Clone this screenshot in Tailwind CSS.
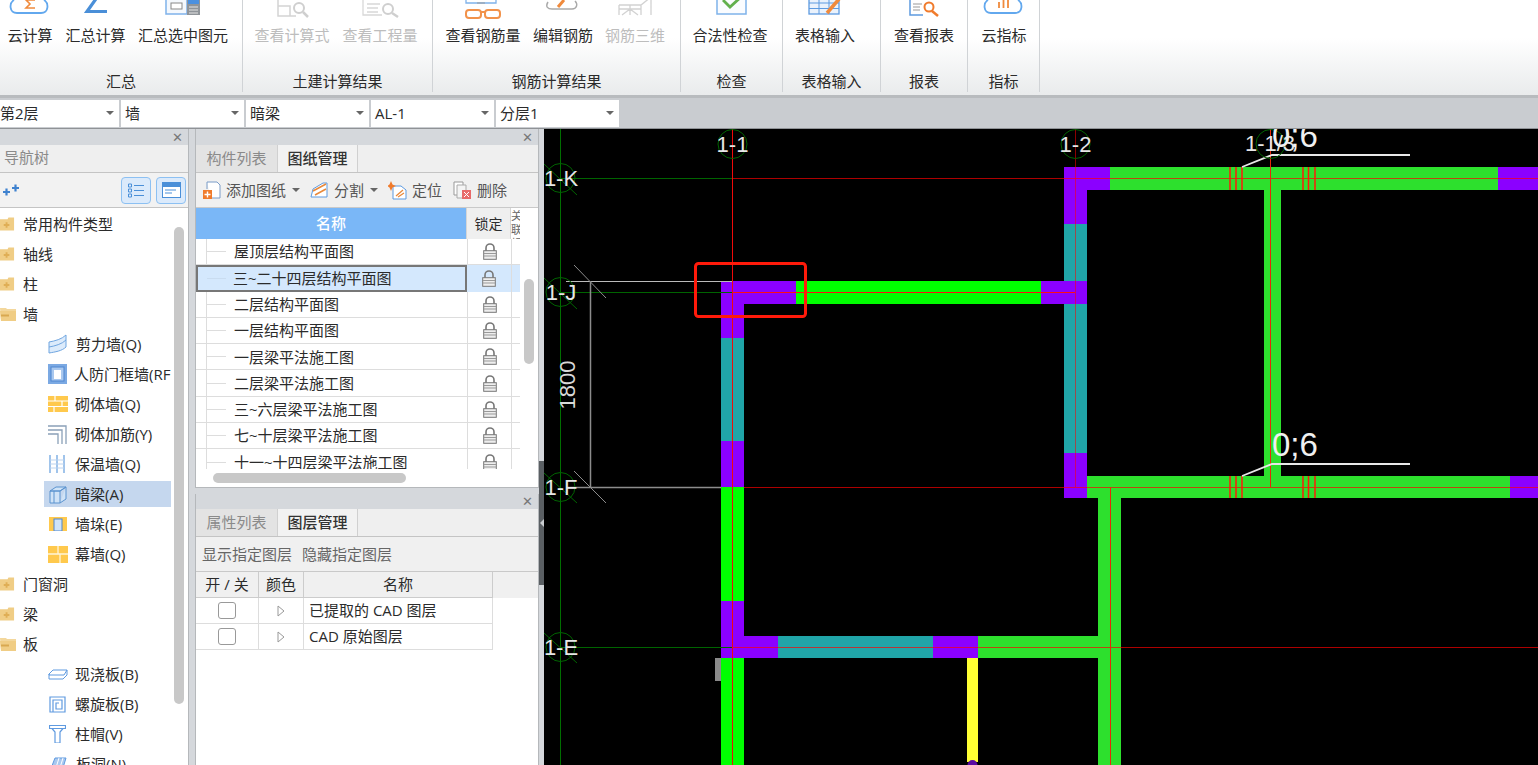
<!DOCTYPE html>
<html lang="zh">
<head>
<meta charset="utf-8">
<title>GTJ</title>
<script src="https://cdn.jsdelivr.net/npm/@tailwindcss/browser@4"></script>
</head>
<body class="w-[1538px] h-[765px] overflow-hidden bg-[#d5d8dc] text-[15px] text-[#2b2b2b] font-['Open_Sans','Noto_Sans_CJK_SC',sans-serif]">

<!-- shared icons -->
<svg class="hidden">
  <symbol id="lock" viewBox="0 0 14 17">
    <path d="M3 8V5a4 4 0 0 1 8 0v3" fill="none" stroke="#777" stroke-width="1.6"/>
    <rect x="0.7" y="7.7" width="12.6" height="8.6" fill="#eee" stroke="#777"/>
    <path d="M1 10.5h12M1 13h12" stroke="#999"/>
  </symbol>
  <symbol id="closed" viewBox="0 0 16 16">
    <path d="M0 3H8L9 1H15V15H0Z" fill="#f0cd85"/>
    <path d="M4 9H10M7 6V12" stroke="#dfae55" stroke-width="2"/>
  </symbol>
  <symbol id="open" viewBox="0 0 17 16">
    <path d="M0 2H6L7 3H16V15H1Z" fill="#f3d79c"/>
    <path d="M0 5H16V15H1Z" fill="#f0cd85"/>
    <path d="M1 9.500H9" stroke="#d9a850" stroke-width="2"/>
  </symbol>
  <symbol id="tri" viewBox="0 0 8 12"><path d="M1 1L7 6L1 11Z" fill="#fff" stroke="#999"/></symbol>
</svg>

<!-- ribbon -->
<div class="flex h-[95px] bg-gradient-to-b from-white from-40% to-[#e9ebec] border-b-[3px] border-[#b8bbbe] box-content">
  <div class="w-[243px] h-[92px] flex flex-col justify-between border-r border-[#d0d3d6]">
    <div class="flex">
      <div class="w-[60px] text-center">
        <svg class="block h-[25px]" width="60" height="25" viewBox="0 0 60 25"><path d="M14 0C9 3 9 13 17 13H41C49 13 49 3 44 0" fill="none" stroke="#62a8ee" stroke-width="1.800"/><path d="M35 0H26L30 4L26 8H35" fill="none" stroke="#f08a3c" stroke-width="1.600"/></svg>
        <div class="leading-[20px]">云计算</div>
      </div>
      <div class="w-[71px] text-center">
        <svg class="block h-[25px]" width="71" height="25" viewBox="60 0 71 25"><path d="M98 -4L87 11.500H107" fill="none" stroke="#4a8fd8" stroke-width="3.200"/></svg>
        <div class="leading-[20px]">汇总计算</div>
      </div>
      <div class="w-[104px] text-center">
        <svg class="block h-[25px]" width="104" height="25" viewBox="131 0 104 25"><rect x="166" y="-3" width="21" height="17" fill="#f4f8fd" stroke="#7fb2ea" stroke-width="1.500"/><rect x="171" y="3" width="11" height="6" fill="#fff" stroke="#888"/><rect x="187" y="-2" width="13" height="17" fill="#8f9499"/><rect x="188" y="0" width="11" height="4" fill="#4a90e0"/><path d="M189 7h9M189 10h9M189 13h9" stroke="#e4e4e4"/></svg>
        <div class="leading-[20px]">汇总选中图元</div>
      </div>
    </div>
    <div class="text-center leading-[20px] mb-[1px]">汇总</div>
  </div>

  <div class="w-[190px] h-[92px] flex flex-col justify-between border-r border-[#d0d3d6]">
    <div class="flex pl-[5px] text-[#bdbdbd]">
      <div class="w-[88px] text-center">
        <svg class="block h-[25px]" width="88" height="25" viewBox="248 0 88 25"><path d="M278 0V16H296M278 6H290V16" fill="none" stroke="#d4d4d4" stroke-width="1.500"/><circle cx="299" cy="8" r="5" fill="none" stroke="#cfcfcf" stroke-width="2"/><path d="M303 12L308 17" stroke="#cfcfcf" stroke-width="2.500"/></svg>
        <div class="leading-[20px]">查看计算式</div>
      </div>
      <div class="w-[88px] text-center">
        <svg class="block h-[25px]" width="88" height="25" viewBox="336 0 88 25"><path d="M363 0V15H382M367 4H380M367 8H378M367 12H378" fill="none" stroke="#d8d8d8" stroke-width="1.300"/><circle cx="388" cy="9" r="5" fill="none" stroke="#cfcfcf" stroke-width="2"/><path d="M392 13L398 17" stroke="#cfcfcf" stroke-width="2.500"/></svg>
        <div class="leading-[20px]">查看工程量</div>
      </div>
    </div>
    <div class="text-center leading-[20px] mb-[1px]">土建计算结果</div>
  </div>

  <div class="w-[248px] h-[92px] flex flex-col justify-between border-r border-[#d0d3d6]">
    <div class="flex pl-[7px]">
      <div class="w-[86px] text-center">
        <svg class="block h-[25px]" width="86" height="25" viewBox="440 0 86 25"><path d="M466 0V3H496V0" fill="none" stroke="#7fb2ea" stroke-width="1.300"/><path d="M477 3H485" stroke="#999"/><rect x="466" y="10" width="15" height="8" rx="3" fill="none" stroke="#f2924a" stroke-width="2"/><rect x="485" y="10" width="15" height="8" rx="3" fill="none" stroke="#f2924a" stroke-width="2"/><path d="M481 12H485" stroke="#f2924a" stroke-width="2"/></svg>
        <div class="leading-[20px]">查看钢筋量</div>
      </div>
      <div class="w-[74px] text-center">
        <svg class="block h-[25px]" width="74" height="25" viewBox="526 0 74 25"><path d="M548 2C545 7 548 9 552 9H572C577 9 578 4 575 1" fill="none" stroke="#aaa" stroke-width="1.500"/><path d="M558 7L564 0" stroke="#f08a3c" stroke-width="3"/></svg>
        <div class="leading-[20px]">编辑钢筋</div>
      </div>
      <div class="w-[70px] text-center text-[#bdbdbd]">
        <svg class="block h-[25px]" width="70" height="25" viewBox="600 0 70 25"><path d="M619 5H641L651 -3M619 5V15M630 5V15M641 5V15M651 -3V15M619 9H641M630 9L622 15M630 9L638 15" fill="none" stroke="#d2d2d2" stroke-width="1.300"/></svg>
        <div class="leading-[20px]">钢筋三维</div>
      </div>
    </div>
    <div class="text-center leading-[20px] mb-[1px]">钢筋计算结果</div>
  </div>

  <div class="w-[102px] h-[92px] flex flex-col justify-between border-r border-[#d0d3d6]">
    <div class="pl-[7px]">
      <div class="w-[84px] text-center">
        <svg class="block h-[25px]" width="84" height="25" viewBox="688 0 84 25"><path d="M717 -2V14H746V-2" fill="#fafcff" stroke="#7fb2ea" stroke-width="1.500"/><path d="M723 0L730 7L741 -3" fill="none" stroke="#62b04e" stroke-width="2.800"/></svg>
        <div class="leading-[20px]">合法性检查</div>
      </div>
    </div>
    <div class="text-center leading-[20px] mb-[1px]">检查</div>
  </div>

  <div class="w-[98px] h-[92px] flex flex-col justify-between border-r border-[#d0d3d6]">
    <div class="pl-[6px]">
      <div class="w-[72px] text-center">
        <svg class="block h-[25px]" width="72" height="25" viewBox="788 0 72 25"><rect x="808" y="-3" width="30" height="17" fill="#eaf2fc" stroke="#5d9ae0" stroke-width="1.300"/><path d="M808 3H838M808 8.500H838M818 -3V14M828 -3V14" stroke="#5d9ae0"/><path d="M826 13L838 -1" stroke="#f08a3c" stroke-width="3.500"/></svg>
        <div class="leading-[20px]">表格输入</div>
      </div>
    </div>
    <div class="text-center leading-[20px] mb-[1px]">表格输入</div>
  </div>

  <div class="w-[87px] h-[92px] flex flex-col justify-between border-r border-[#d0d3d6]">
    <div class="pl-[9px]">
      <div class="w-[68px] text-center">
        <svg class="block h-[25px]" width="68" height="25" viewBox="889 0 68 25"><path d="M909 0V15H922" fill="none" stroke="#5d9ae0" stroke-width="1.500"/><path d="M912 4H921M912 7H919M912 10H919" stroke="#999"/><circle cx="928" cy="7" r="4.500" fill="#fff" stroke="#f07b2c" stroke-width="2"/><path d="M931 11L937 16" stroke="#f07b2c" stroke-width="2.500"/></svg>
        <div class="leading-[20px]">查看报表</div>
      </div>
    </div>
    <div class="text-center leading-[20px] mb-[1px]">报表</div>
  </div>

  <div class="w-[72px] h-[92px] flex flex-col justify-between border-r border-[#d0d3d6]">
    <div class="pl-[6px]">
      <div class="w-[60px] text-center">
        <svg class="block h-[25px]" width="60" height="25" viewBox="973 0 60 25"><path d="M987 0C982 3 982 13 990 13H1014C1022 13 1022 3 1017 0" fill="none" stroke="#62a8ee" stroke-width="1.800"/><path d="M998 2V8M1002.500 0V8M1007 0V8" stroke="#f08a3c" stroke-width="1.800"/></svg>
        <div class="leading-[20px]">云指标</div>
      </div>
    </div>
    <div class="text-center leading-[20px] mb-[1px]">指标</div>
  </div>
</div>

<!-- selectors -->
<div class="flex gap-[2px] h-[31px] pt-[2px] bg-[#c9ccd0] border-b border-[#8f9296] box-border">
  <div class="w-[119px] h-[27px] pb-[1px] bg-white flex items-center justify-between pr-[5px]"><span>第2层</span><span class="w-0 h-0 border-x-[4px] border-t-[4px] border-x-transparent border-t-[#666]"></span></div>
  <div class="w-[123px] h-[27px] pb-[1px] bg-white flex items-center justify-between pl-[4px] pr-[5px]"><span>墙</span><span class="w-0 h-0 border-x-[4px] border-t-[4px] border-x-transparent border-t-[#666]"></span></div>
  <div class="w-[123px] h-[27px] pb-[1px] bg-white flex items-center justify-between pl-[4px] pr-[5px]"><span>暗梁</span><span class="w-0 h-0 border-x-[4px] border-t-[4px] border-x-transparent border-t-[#666]"></span></div>
  <div class="w-[123px] h-[27px] pb-[1px] bg-white flex items-center justify-between pl-[4px] pr-[5px]"><span>AL-1</span><span class="w-0 h-0 border-x-[4px] border-t-[4px] border-x-transparent border-t-[#666]"></span></div>
  <div class="w-[123px] h-[27px] pb-[1px] bg-white flex items-center justify-between pl-[4px] pr-[5px]"><span>分层1</span><span class="w-0 h-0 border-x-[4px] border-t-[4px] border-x-transparent border-t-[#666]"></span></div>
</div>

<div class="flex h-[636px]">

  <!-- nav tree -->
  <div class="w-[189px] flex flex-col border-r border-[#b5b8bb] bg-white">
    <div class="h-[16px] bg-[#d5d8dc] flex items-center justify-end pr-[5px] text-[#777] text-[13px] leading-none">✕</div>
    <div class="h-[28px] pb-[2px] bg-[#efefef] border-b border-[#c4c4c4] flex items-center pl-[4px] text-[#8a8a8a]">导航树</div>
    <div class="h-[35px] bg-[#f2f2f2] border-b border-[#c4c4c4] flex items-center justify-between pl-[3px] pr-[2px]">
      <svg width="16" height="12" viewBox="0 0 16 12"><path d="M0 8H7M3.500 4.500V11.500" stroke="#3f82cf" stroke-width="2.200"/><path d="M9 4H16M12.500 0.500V7.500" stroke="#3f82cf" stroke-width="2.200"/></svg>
      <div class="flex gap-[5px]">
        <div class="w-[30px] h-[27px] rounded-[4px] bg-[#dbeafb] border border-[#8cc0f2] flex items-center justify-center">
          <svg width="16" height="15" viewBox="0 0 16 15"><path d="M0.500 1h3v3h-3zM0.500 6h3v3h-3zM0.500 11h3v3h-3z" fill="none" stroke="#4a8fd8"/><path d="M6 2.500H16M6 7.500H16M6 12.500H16" stroke="#4a8fd8"/></svg>
        </div>
        <div class="w-[30px] h-[27px] rounded-[4px] bg-[#dbeafb] border border-[#8cc0f2] flex items-center justify-center">
          <svg width="19" height="16" viewBox="0 0 19 16"><rect x="0.500" y="0.500" width="18" height="15" fill="#fff" stroke="#4a8fd8"/><rect x="1" y="1" width="17" height="4" fill="#4a8fd8"/><path d="M3 8H14M3 11H10" stroke="#4a8fd8"/></svg>
        </div>
      </div>
    </div>
    <div class="relative flex-1 overflow-hidden pt-[1px]">
      <div class="absolute left-[174px] top-[19px] w-[10px] h-[477px] rounded-full bg-[#c8c8c8]"></div>
      <div class="h-[30px] flex items-center gap-[8px]"><svg width="15" height="16"><use href="#closed"/></svg>常用构件类型</div>
      <div class="h-[30px] flex items-center gap-[8px]"><svg width="15" height="16"><use href="#closed"/></svg>轴线</div>
      <div class="h-[30px] flex items-center gap-[8px]"><svg width="15" height="16"><use href="#closed"/></svg>柱</div>
      <div class="h-[30px] flex items-center gap-[6px]"><svg width="17" height="16"><use href="#open"/></svg>墙</div>

      <div class="h-[30px] w-[171px] flex items-center pl-[48px] gap-[8px] overflow-hidden whitespace-nowrap">
        <svg class="shrink-0" width="20" height="20" viewBox="0 0 20 20"><path d="M1 8C7 7 14 5 18 1V13C14 17 7 18 1 19Z" fill="#dcebfb" stroke="#6fa5e0"/><path d="M1 13C7 12 14 10 18 6" fill="none" stroke="#6fa5e0"/></svg>剪力墙(Q)</div>
      <div class="h-[30px] w-[171px] flex items-center pl-[48px] gap-[7px] overflow-hidden whitespace-nowrap">
        <svg class="shrink-0" width="19" height="20" viewBox="0 0 19 20"><rect width="19" height="20" fill="#7ba9e3"/><rect x="3" y="3" width="13" height="14" fill="#a9c8ef" stroke="#4f86cf"/><rect x="6" y="6" width="7" height="9" fill="#fff"/></svg>人防门框墙(RF</div>
      <div class="h-[30px] w-[171px] flex items-center pl-[48px] gap-[7px] overflow-hidden whitespace-nowrap">
        <svg class="shrink-0" width="20" height="16" viewBox="0 0 20 16"><rect width="20" height="16" fill="#ffc94d"/><path d="M0 5H20M0 10.500H20M7 0V5M14 5V10.500M6 10.500V16" stroke="#fff" stroke-width="1.200"/></svg>砌体墙(Q)</div>
      <div class="h-[30px] w-[171px] flex items-center pl-[48px] gap-[8px] overflow-hidden whitespace-nowrap">
        <svg class="shrink-0" width="19" height="19" viewBox="0 0 19 19"><path d="M0 1H18V19M0 5H14V19M0 9H10V19" fill="none" stroke="#8aa0b8" stroke-width="1.300"/></svg>砌体加筋(Y)</div>
      <div class="h-[30px] w-[171px] flex items-center pl-[48px] gap-[9px] overflow-hidden whitespace-nowrap">
        <svg class="shrink-0" width="18" height="18" viewBox="0 0 18 18"><path d="M2 0V18M9 0V18M16 0V18" stroke="#6fa5e0" stroke-width="1.300"/><path d="M2 5H16M2 9H16M2 13H16" stroke="#bcd3ee"/></svg>保温墙(Q)</div>
      <div class="h-[30px] w-[171px] flex items-center pl-[44px] overflow-hidden whitespace-nowrap">
        <div class="w-[127px] h-[26px] bg-[#c5d7ee] flex items-center pl-[5px] gap-[8px]">
          <svg class="shrink-0" width="18" height="19" viewBox="0 0 18 19"><path d="M1 6L7 2H17L11 6ZM1 6V18H11V6M11 18L17 14V2" fill="#cfe3f7" stroke="#5b93cf"/><path d="M1 6H11L17 2" fill="none" stroke="#5b93cf"/><path d="M5 6V18" stroke="#5b93cf"/></svg>暗梁(A)</div>
      </div>
      <div class="h-[30px] w-[171px] flex items-center pl-[49px] gap-[8px] overflow-hidden whitespace-nowrap">
        <svg class="shrink-0" width="18" height="14" viewBox="0 0 18 14"><rect width="18" height="14" fill="#ffc94d"/><rect x="5" y="2" width="8" height="12" fill="#cfe3f7" stroke="#4f86cf"/></svg>墙垛(E)</div>
      <div class="h-[30px] w-[171px] flex items-center pl-[48px] gap-[7px] overflow-hidden whitespace-nowrap">
        <svg class="shrink-0" width="20" height="17" viewBox="0 0 20 17"><rect width="20" height="17" fill="#ffc94d"/><path d="M0 8H20M10 0V8M12 8V17" stroke="#fff5d8" stroke-width="1.300"/></svg>幕墙(Q)</div>

      <div class="h-[30px] flex items-center gap-[8px]"><svg width="15" height="16"><use href="#closed"/></svg>门窗洞</div>
      <div class="h-[30px] flex items-center gap-[8px]"><svg width="15" height="16"><use href="#closed"/></svg>梁</div>
      <div class="h-[30px] flex items-center gap-[6px]"><svg width="17" height="16"><use href="#open"/></svg>板</div>

      <div class="h-[30px] w-[171px] flex items-center pl-[48px] gap-[7px] whitespace-nowrap">
        <svg class="shrink-0" width="20" height="11" viewBox="0 0 20 11"><path d="M1 5L5 1H19L16 6H1ZM1 5V10H15L19 6V1" fill="#fff" stroke="#5f9ae0"/></svg>现浇板(B)</div>
      <div class="h-[30px] w-[171px] flex items-center pl-[49px] gap-[9px] whitespace-nowrap">
        <svg class="shrink-0" width="17" height="17" viewBox="0 0 17 17"><path d="M1 1H16V16H1ZM4 16V4H13V13H7V7H10" fill="none" stroke="#5f9ae0" stroke-width="1.200"/></svg>螺旋板(B)</div>
      <div class="h-[30px] w-[171px] flex items-center pl-[49px] gap-[9px] whitespace-nowrap">
        <svg class="shrink-0" width="17" height="18" viewBox="0 0 17 18"><path d="M0.500 0.500H16.500V3.500H0.500ZM3 3.500L6 7V18H11V7L14 3.500" fill="#fff" stroke="#5f9ae0" stroke-width="1.200"/></svg>柱帽(V)</div>
      <div class="h-[30px] w-[171px] flex items-center pl-[49px] gap-[9px] whitespace-nowrap">
        <svg class="shrink-0" width="18" height="16" viewBox="0 0 18 16"><path d="M1 15L6 2H17L13 15Z" fill="#a9c8ef" stroke="#5f9ae0"/><path d="M6 15L10 2M10 15L14 2" stroke="#fff"/></svg>板洞(N)</div>
    </div>
  </div>

  <div class="w-[6px]"></div>

  <!-- drawing and layer panels -->
  <div class="w-[344px] flex flex-col">
    <div class="h-[359px] flex flex-col bg-white border-x border-b border-[#b5b8bb]">
      <div class="h-[16px] shrink-0 bg-[#d5d8dc] flex items-center justify-end pr-[5px] text-[#777] text-[13px] leading-none">✕</div>
      <div class="h-[28px] shrink-0 flex bg-[#efefef] border-b border-[#c4c4c4]">
        <div class="w-[81px] bg-[#e3e3e3] flex items-center justify-center text-[#8a8a8a]">构件列表</div>
        <div class="w-[81px] bg-[#f2f2f2] border-x border-[#d0d0d0] flex items-center justify-center font-medium text-[#333]">图纸管理</div>
      </div>
      <div class="h-[35px] shrink-0 bg-[#f0f0f0] border-b border-[#c9c9c9] flex items-center pl-[7px] text-[#555]">
        <svg width="18" height="19" viewBox="0 0 18 19"><path d="M4 1H14L17 4V17H8M4 1V8" fill="#fff" stroke="#7a9cc8"/><rect x="0" y="9" width="9" height="9" fill="#f07b2c"/><path d="M1.500 13.500H7.500M4.500 10.500V16.500" stroke="#fff" stroke-width="1.400"/></svg>
        <span class="ml-[5px]">添加图纸</span>
        <span class="ml-[6px] w-0 h-0 border-x-[4px] border-t-[4px] border-x-transparent border-t-[#666]"></span>
        <svg class="ml-[10px]" width="20" height="18" viewBox="0 0 20 18"><path d="M1 16L3 8L13 2H17V16Z" fill="#fff" stroke="#5d9ae0"/><path d="M3 10L16 3M5 14L16 8" stroke="#e9893a" stroke-width="1.500"/></svg>
        <span class="ml-[4px]">分割</span>
        <span class="ml-[6px] w-0 h-0 border-x-[4px] border-t-[4px] border-x-transparent border-t-[#666]"></span>
        <svg class="ml-[10px]" width="19" height="19" viewBox="0 0 19 19"><path d="M5 5H13L18 9V18H5Z" fill="#fff" stroke="#5d9ae0"/><path d="M8 15L15 9M10 16L16 12" stroke="#e9893a" stroke-width="1.300"/><path d="M3 0L4.500 3.500L8 5L4.500 6.500L3 10L1.500 6.500L-1 5L1.500 3.500Z" fill="#f07b2c"/></svg>
        <span class="ml-[5px]">定位</span>
        <svg class="ml-[11px]" width="18" height="18" viewBox="0 0 18 18"><path d="M1 1H10V14H1Z" fill="#fff" stroke="#999"/><path d="M4 4H13V17H4Z" fill="#f4f4f4" stroke="#aaa"/><rect x="9" y="9" width="9" height="9" fill="#e86a6a"/><path d="M11 11L16 16M16 11L11 16" stroke="#fff"/></svg>
        <span class="ml-[6px]">删除</span>
      </div>

      <div class="relative h-[261px] shrink-0 overflow-hidden pr-[18px]">
        <div class="absolute left-[328px] top-[71px] w-[10px] h-[85px] rounded-full bg-[#c8c8c8]"></div>
        <div class="flex h-[31px]">
          <div class="w-[271px] bg-[#7ab7f7] text-white font-medium flex items-center justify-center">名称</div>
          <div class="w-[45px] bg-[#efefef] border-x border-[#d6d6d6] flex items-center justify-center text-[14px]">锁定</div>
          <div class="w-[9px] overflow-hidden text-[11px] leading-[14px] text-[#666] pt-[1px]">关联<br>标</div>
        </div>
        <div class="flex h-[26.300px] border-b border-[#ddd]"><div class="w-[271px] flex items-center pl-[10px]"><span class="self-stretch w-px bg-[#ddd]"></span><span class="w-[19px] h-px bg-[#ddd] mr-[8px]"></span>屋顶层结构平面图</div><div class="w-[45px] border-x border-[#ddd] flex items-center justify-center"><svg width="14" height="17"><use href="#lock"/></svg></div></div>
        <div class="flex h-[26.300px] bg-[#d4e8fd]"><div class="w-[271px] flex items-center pl-[9px] border-2 border-[#777]"><span class="w-[19px] h-px bg-[#c9dcf0] mr-[7px]"></span>三~二十四层结构平面图</div><div class="w-[45px] border-r border-[#ddd] flex items-center justify-center"><svg width="14" height="17"><use href="#lock"/></svg></div></div>
        <div class="flex h-[26.300px] border-b border-[#ddd]"><div class="w-[271px] flex items-center pl-[10px]"><span class="self-stretch w-px bg-[#ddd]"></span><span class="w-[19px] h-px bg-[#ddd] mr-[8px]"></span>二层结构平面图</div><div class="w-[45px] border-x border-[#ddd] flex items-center justify-center"><svg width="14" height="17"><use href="#lock"/></svg></div></div>
        <div class="flex h-[26.300px] border-b border-[#ddd]"><div class="w-[271px] flex items-center pl-[10px]"><span class="self-stretch w-px bg-[#ddd]"></span><span class="w-[19px] h-px bg-[#ddd] mr-[8px]"></span>一层结构平面图</div><div class="w-[45px] border-x border-[#ddd] flex items-center justify-center"><svg width="14" height="17"><use href="#lock"/></svg></div></div>
        <div class="flex h-[26.300px] border-b border-[#ddd]"><div class="w-[271px] flex items-center pl-[10px]"><span class="self-stretch w-px bg-[#ddd]"></span><span class="w-[19px] h-px bg-[#ddd] mr-[8px]"></span>一层梁平法施工图</div><div class="w-[45px] border-x border-[#ddd] flex items-center justify-center"><svg width="14" height="17"><use href="#lock"/></svg></div></div>
        <div class="flex h-[26.300px] border-b border-[#ddd]"><div class="w-[271px] flex items-center pl-[10px]"><span class="self-stretch w-px bg-[#ddd]"></span><span class="w-[19px] h-px bg-[#ddd] mr-[8px]"></span>二层梁平法施工图</div><div class="w-[45px] border-x border-[#ddd] flex items-center justify-center"><svg width="14" height="17"><use href="#lock"/></svg></div></div>
        <div class="flex h-[26.300px] border-b border-[#ddd]"><div class="w-[271px] flex items-center pl-[10px]"><span class="self-stretch w-px bg-[#ddd]"></span><span class="w-[19px] h-px bg-[#ddd] mr-[8px]"></span>三~六层梁平法施工图</div><div class="w-[45px] border-x border-[#ddd] flex items-center justify-center"><svg width="14" height="17"><use href="#lock"/></svg></div></div>
        <div class="flex h-[26.300px] border-b border-[#ddd]"><div class="w-[271px] flex items-center pl-[10px]"><span class="self-stretch w-px bg-[#ddd]"></span><span class="w-[19px] h-px bg-[#ddd] mr-[8px]"></span>七~十层梁平法施工图</div><div class="w-[45px] border-x border-[#ddd] flex items-center justify-center"><svg width="14" height="17"><use href="#lock"/></svg></div></div>
        <div class="flex h-[26.300px] border-b border-[#ddd]"><div class="w-[271px] flex items-center pl-[10px]"><span class="self-stretch w-px bg-[#ddd]"></span><span class="w-[19px] h-px bg-[#ddd] mr-[8px]"></span>十一~十四层梁平法施工图</div><div class="w-[45px] border-x border-[#ddd] flex items-center justify-center"><svg width="14" height="17"><use href="#lock"/></svg></div></div>
      </div>
      <div class="pt-[4px] pl-[17px]"><div class="w-[193px] h-[10px] rounded-full bg-[#c8c8c8]"></div></div>
    </div>

    <div class="h-[6px] shrink-0"></div>

    <div class="flex-1 flex flex-col bg-white border-x border-[#b5b8bb]">
      <div class="h-[15px] shrink-0 bg-[#d5d8dc] flex items-center justify-end pr-[5px] text-[#777] text-[13px] leading-none">✕</div>
      <div class="h-[28px] shrink-0 flex bg-[#efefef] border-b border-[#c4c4c4]">
        <div class="w-[81px] bg-[#e3e3e3] flex items-center justify-center text-[#8a8a8a]">属性列表</div>
        <div class="w-[81px] bg-[#f2f2f2] border-x border-[#d0d0d0] flex items-center justify-center font-medium text-[#333]">图层管理</div>
      </div>
      <div class="h-[35px] shrink-0 bg-[#f0f0f0] border-b border-[#c9c9c9] flex items-center gap-[10px] pl-[6px] text-[#666]"><span>显示指定图层</span><span>隐藏指定图层</span></div>
      <div class="flex h-[26px] shrink-0 bg-[#f0f0f0]">
        <div class="w-[63px] border-r border-b border-[#ccc] flex items-center justify-center">开 / 关</div>
        <div class="w-[45px] border-r border-b border-[#ccc] flex items-center justify-center">颜色</div>
        <div class="w-[189px] border-r border-b border-[#ccc] flex items-center justify-center">名称</div>
      </div>
      <div class="flex h-[26px] w-[297px]">
        <div class="w-[63px] border-r border-b border-[#ddd] flex items-center justify-center"><span class="w-[18px] h-[17px] rounded-[3px] border border-[#999] bg-white"></span></div>
        <div class="w-[45px] border-r border-b border-[#ddd] flex items-center justify-center"><svg width="8" height="12"><use href="#tri"/></svg></div>
        <div class="w-[189px] border-r border-b border-[#ddd] flex items-center pl-[5px] pb-[1px]">已提取的 CAD 图层</div>
      </div>
      <div class="flex h-[26px] w-[297px]">
        <div class="w-[63px] border-r border-b border-[#ddd] flex items-center justify-center"><span class="w-[18px] h-[17px] rounded-[3px] border border-[#999] bg-white"></span></div>
        <div class="w-[45px] border-r border-b border-[#ddd] flex items-center justify-center"><svg width="8" height="12"><use href="#tri"/></svg></div>
        <div class="w-[189px] border-r border-b border-[#ddd] flex items-center pl-[5px] pb-[1px]">CAD 原始图层</div>
      </div>
    </div>
  </div>

  <!-- splitter -->
  <div class="w-[5px] flex flex-col">
    <div class="h-[332px]"></div>
    <div class="h-[124px] bg-[#5a5f63] flex items-center justify-center">
      <span class="w-0 h-0 border-y-[4px] border-r-[4px] border-y-transparent border-r-[#c9ccd0]"></span>
    </div>
  </div>

  <!-- CAD canvas -->
  <svg class="block bg-black" width="994" height="636" viewBox="544 129 994 636">
    <g>
      <rect x="721" y="281" width="23" height="57" fill="#8b00ff"/>
      <rect x="721" y="338" width="23" height="103" fill="#20a5a8"/>
      <rect x="721" y="441" width="23" height="46" fill="#8b00ff"/>
      <rect x="721" y="487" width="23" height="114" fill="#00ff00"/>
      <rect x="721" y="601" width="23" height="57" fill="#8b00ff"/>
      <rect x="721" y="658" width="23" height="107" fill="#00ff00"/>
      <rect x="715" y="658" width="6" height="23" fill="#8a8a8a"/>

      <rect x="721" y="281" width="75" height="23" fill="#8b00ff"/>
      <rect x="796" y="281" width="245" height="23" fill="#00ff00"/>
      <rect x="1041" y="281" width="46" height="23" fill="#8b00ff"/>

      <rect x="744" y="636" width="34" height="22" fill="#8b00ff"/>
      <rect x="778" y="636" width="155" height="22" fill="#20a5a8"/>
      <rect x="933" y="636" width="45" height="22" fill="#8b00ff"/>
      <rect x="978" y="636" width="143" height="22" fill="#2de02d"/>
      <rect x="967" y="658" width="11" height="104" fill="#ffff33"/>
      <circle cx="972.500" cy="765" r="5" fill="#5a0aa0"/>

      <rect x="1064" y="167" width="23" height="57" fill="#8b00ff"/>
      <rect x="1064" y="224" width="23" height="229" fill="#20a5a8"/>
      <rect x="1041" y="281" width="46" height="23" fill="#8b00ff"/>
      <rect x="1064" y="453" width="23" height="45" fill="#8b00ff"/>
      <rect x="1087" y="167" width="23" height="23" fill="#8b00ff"/>
      <rect x="1110" y="167" width="388" height="23" fill="#2de02d"/>
      <rect x="1498" y="167" width="40" height="23" fill="#8b00ff"/>
      <rect x="1264" y="190" width="17" height="286" fill="#2de02d"/>
      <rect x="1087" y="476" width="423" height="22" fill="#2de02d"/>
      <rect x="1510" y="476" width="28" height="22" fill="#8b00ff"/>
      <rect x="1098" y="498" width="23" height="267" fill="#2de02d"/>
    </g>

    <!-- axes -->
    <g fill="none">
      <path d="M560.500 129V765" stroke="#006e00"/>
      <path d="M560 178.500H732M560 292.500H732M560 647.500H732" stroke="#006400"/>
      <path d="M732.500 178.500H1538M744 487.500H1538M732.500 647.500H1538" stroke="#ff0000" stroke-opacity="0.68"/>
      <path d="M732 292.500H1075" stroke="#ff1010"/>
      <path d="M1075.500 129V487" stroke="#ff0000" stroke-opacity="0.55"/>
      <path d="M732.500 129V765" stroke="#f00a0a"/>
      <path d="M1110.500 487V765M1270.500 129V487" stroke="#e8280a"/>
      <path d="M1230 167V190M1236 167V190M1242 167V190M1303 167V190M1308.500 167V190M1315 167V190M1230 476V498M1236 476V498M1242 476V498M1303 476V498M1308.500 476V498M1315 476V498" stroke="#ff1a0a" stroke-width="1.500"/>

      <!-- dimension -->
      <path d="M566 281.500H732" stroke="#bbb"/>
      <path d="M566 487.500H721" stroke="#8c8c8c" stroke-width="1.500"/>
      <path d="M590.500 281V487" stroke="#8c8c8c" stroke-width="1.500"/>
      <path d="M574 265L606 298M574 471L606 503" stroke="#8c8c8c"/>

      <!-- leaders -->
      <path d="M1242 167L1272 155H1410M1242 476L1272 464H1410" stroke="#e8e8e8" stroke-width="1.800"/>

      <!-- axis bubbles -->
      <g stroke="#006400">
        <circle cx="732.500" cy="144" r="14.500"/>
        <circle cx="1075.500" cy="144" r="14.500"/>
        <circle cx="1270.500" cy="144" r="14.500"/>
        <circle cx="560.500" cy="178" r="14.500"/>
        <circle cx="560.500" cy="292" r="14.500"/>
        <circle cx="560.500" cy="487" r="14.500"/>
        <circle cx="560.500" cy="647" r="14.500"/>
        <path d="M544 164L577 195M544 278L577 309M544 473L577 503M544 633L577 663"/>
      </g>
    </g>

    <rect x="695.500" y="263.500" width="110" height="53" rx="3" fill="none" stroke="#ff1a0a" stroke-width="3"/>

    <g fill="#e6e6e6" font-size="22" font-family="'Liberation Sans',sans-serif" text-anchor="middle">
      <text x="732.500" y="152">1-1</text>
      <text x="1075.500" y="152">1-2</text>
      <text x="1270" y="151">1-1/3</text>
      <text x="561" y="186">1-K</text>
      <text x="561" y="300">1-J</text>
      <text x="561" y="495">1-F</text>
      <text x="561" y="655">1-E</text>
      <text transform="translate(575 385) rotate(-90)" fill="#d8d8d8">1800</text>
    </g>
    <g fill="#f0f0f0" font-size="33" font-family="'Liberation Sans',sans-serif">
      <text x="1272" y="147">0;6</text>
      <text x="1272" y="456">0;6</text>
    </g>
  </svg>
</div>

</body>
</html>
